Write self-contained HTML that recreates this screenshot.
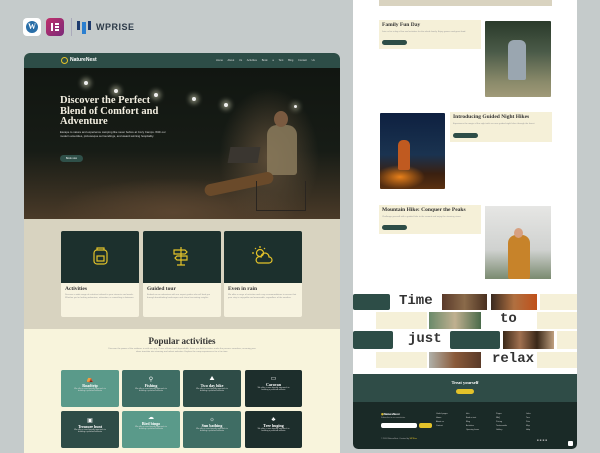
<!DOCTYPE html><html><head><meta charset="utf-8"><style>
*{margin:0;padding:0;box-sizing:border-box}
body{width:600px;height:450px;overflow:hidden;background:#c5cbcb;font-family:"Liberation Sans",sans-serif;position:relative}
.a{position:absolute}
.serif{font-family:"Liberation Serif",serif;font-weight:bold}
.t{font-size:2.2px;color:#999;line-height:3.4px}
</style></head><body>
<!-- logos -->
<div class="a" style="left:23px;top:18px;width:18px;height:18px;border-radius:4px;background:#fff"><div class="a" style="left:3px;top:3px;width:12px;height:12px;border-radius:50%;background:#2a6fa8;color:#fff;font:bold 8px 'Liberation Serif';text-align:center;line-height:12px">W</div></div>
<div class="a" style="left:46px;top:18px;width:18px;height:18px;border-radius:4px;background:linear-gradient(135deg,#c0306a,#7a2a7a)"><div class="a" style="left:5px;top:5px;width:2px;height:8px;background:#fff"></div><div class="a" style="left:9px;top:5px;width:4px;height:1.6px;background:#fff"></div><div class="a" style="left:9px;top:8.2px;width:4px;height:1.6px;background:#fff"></div><div class="a" style="left:9px;top:11.4px;width:4px;height:1.6px;background:#fff"></div></div>
<div class="a" style="left:71px;top:18px;width:1px;height:18px;background:#aab"></div>
<div class="a" style="left:77px;top:20px;width:14px;height:14px"><div class="a" style="left:0;top:1px;width:3px;height:9px;background:#1d3b6e"></div><div class="a" style="left:5px;top:2px;width:4px;height:12px;background:#2b7fd0"></div><div class="a" style="left:11px;top:1px;width:3px;height:9px;background:#1d3b6e"></div></div>
<div class="a" style="left:96px;top:22px;font-size:9px;font-weight:bold;color:#2c3a48;letter-spacing:.5px">WPRISE</div>

<!-- left panel -->
<div class="a" style="left:24px;top:53px;width:316px;height:400px;border-radius:6px 6px 0 0;overflow:hidden;background:#f8f4dc">
 <div class="a" style="left:0;top:0;width:316px;height:15px;background:#2d4d47"></div>
 <div class="a" style="left:37px;top:4px;width:7px;height:7px;border-radius:50%;border:1.5px solid #e3c22a"></div>
 <div class="a" style="left:46px;top:4px;font-size:5px;color:#fff;font-weight:bold">NatureNest</div>
 <div class="a" style="left:192px;top:6px;font-size:2.6px;color:#ddd;word-spacing:4px">Home About Us Activities Book a Tent Blog Contact Us</div>
 <div class="a" style="left:0;top:15px;width:316px;height:151px;background:radial-gradient(ellipse 50px 70px at 245px 90px,#5a4a36,transparent),radial-gradient(ellipse 120px 35px at 150px 145px,#5a4530,transparent),linear-gradient(180deg,#111611 0%,#171c16 55%,#4a3a28 100%)"></div>
 <div class="a" style="left:60px;top:28px;width:4px;height:4px;border-radius:50%;background:#eee;box-shadow:0 0 5px 3px rgba(255,255,220,.4)"></div>
 <div class="a" style="left:90px;top:36px;width:4px;height:4px;border-radius:50%;background:#eee;box-shadow:0 0 5px 3px rgba(255,255,220,.4)"></div>
 <div class="a" style="left:130px;top:40px;width:4px;height:4px;border-radius:50%;background:#eee;box-shadow:0 0 5px 3px rgba(255,255,220,.4)"></div>
 <div class="a" style="left:168px;top:44px;width:4px;height:4px;border-radius:50%;background:#eee;box-shadow:0 0 5px 3px rgba(255,255,220,.4)"></div>
 <div class="a" style="left:200px;top:50px;width:4px;height:4px;border-radius:50%;background:#eee;box-shadow:0 0 5px 3px rgba(255,255,220,.4)"></div>
 <div class="a" style="left:270px;top:52px;width:3px;height:3px;border-radius:50%;background:#eee;box-shadow:0 0 5px 3px rgba(255,255,220,.3)"></div>
 <!-- man -->
 <div class="a" style="left:243px;top:72px;width:30px;height:50px;background:#8a7a5c;border-radius:10px 10px 3px 3px;opacity:.85"></div>
 <div class="a" style="left:250px;top:58px;width:14px;height:16px;background:#7a5a40;border-radius:50%"></div>
 <div class="a" style="left:180px;top:125px;width:70px;height:12px;background:#6a4a2a;border-radius:6px;transform:rotate(-12deg)"></div>
 <div class="a" style="left:205px;top:94px;width:30px;height:16px;background:#3a3630;transform:skewX(-10deg)"></div>
 <div class="a" style="left:232px;top:128px;width:50px;height:30px;border:1.5px solid #2a2520;border-top:none"></div>
 <div class="a serif" style="left:36px;top:43px;font-size:10.5px;line-height:10.5px;color:#f2eee0;width:105px">Discover the Perfect Blend of Comfort and Adventure</div>
 <div class="a" style="left:36px;top:77px;font-size:2.8px;line-height:4px;color:#ddd;width:110px">Escape to nature and experience camping like never before at Cozy Camps. With our modern amenities, picturesque surroundings, and award-winning hospitality.</div>
 <div class="a" style="left:36px;top:102px;width:23px;height:7px;border-radius:4px;background:#2f5049;font-size:2.5px;color:#fff;text-align:center;line-height:7px">Book now</div>
 <div class="a" style="left:0;top:166px;width:316px;height:110px;background:#d8d3c0"></div>
 <!-- cards -->
 <div class="a" style="left:37px;top:178px;width:78px;height:86px;background:#f7f3e0;border-radius:2px;overflow:hidden"><div style="height:52px;background:#1c302d"></div></div>
 <div class="a" style="left:119px;top:178px;width:78px;height:86px;background:#f7f3e0;border-radius:2px;overflow:hidden"><div style="height:52px;background:#1c302d"></div></div>
 <div class="a" style="left:200px;top:178px;width:78px;height:86px;background:#f7f3e0;border-radius:2px;overflow:hidden"><div style="height:52px;background:#1c302d"></div></div>
 <svg class="a" style="left:0;top:0" width="316" height="300" fill="none" stroke="#e3c22a" stroke-width="1.2">
  <rect x="70" y="197" width="13" height="14" rx="3"/><rect x="73" y="203" width="7" height="5"/><path d="M73 197v-2h7v2"/>
  <path d="M157 194v18M153 212h8M150 197h11l2 2-2 2h-11zM163 203h-10l-2 2 2 2h10z"/>
  <circle cx="236" cy="200" r="3.5"/><path d="M236 193v2M230 200h-2M231 195l1 1M241 195l-1 1"/><path d="M234 210h11a3 3 0 0 0 0-6 4 4 0 0 0-8 0 3 3 0 0 0-3 6z"/>
 </svg>
 <div class="a serif" style="left:41px;top:233px;font-size:5.5px;color:#333">Activities</div>
 <div class="a serif" style="left:123px;top:233px;font-size:5.5px;color:#333">Guided tour</div>
 <div class="a serif" style="left:204px;top:233px;font-size:5.5px;color:#333">Even in rain</div>
 <div class="a t" style="left:41px;top:241px;width:70px">Discover a wide range of activities tailored to your interests and needs. Whether you're looking adventure, relaxation, or something in between.</div>
 <div class="a t" style="left:123px;top:241px;width:70px">Embark on an adventure with our expert guides who will lead you through breathtaking landscapes and share fascinating insights.</div>
 <div class="a t" style="left:204px;top:241px;width:70px">We offer a range of activities and cozy accommodations to ensure that your stay is enjoyable and memorable, regardless of the weather.</div>
 <div class="a serif" style="left:0;top:283px;width:316px;text-align:center;font-size:9px;color:#333">Popular activities</div>
 <div class="a t" style="left:83px;top:295px;width:150px;text-align:center">Discover the power of the outdoors in with our app. These efficient and dependable, these pre-build activities make the process seamless, ensuring your ideas translate into stunning and robust websites. Explore the camp experiences for a fun time.</div>
</div>
<!-- activity grid -->
<div class="a" style="left:61px;top:370px;width:58px;height:37px;background:#5a9a8a;border-radius:2px"></div>
<div class="a" style="left:122px;top:370px;width:58px;height:37px;background:#3f6d64;border-radius:2px"></div>
<div class="a" style="left:183px;top:370px;width:58px;height:37px;background:#2e4c47;border-radius:2px"></div>
<div class="a" style="left:245px;top:370px;width:57px;height:37px;background:#1d2e2c;border-radius:2px"></div>
<div class="a" style="left:61px;top:411px;width:58px;height:37px;background:#2e4c47;border-radius:2px"></div>
<div class="a" style="left:122px;top:411px;width:58px;height:37px;background:#5a9a8a;border-radius:2px"></div>
<div class="a" style="left:183px;top:411px;width:58px;height:37px;background:#3f6d64;border-radius:2px"></div>
<div class="a" style="left:245px;top:411px;width:57px;height:37px;background:#1d2e2c;border-radius:2px"></div>
<div class="a" style="left:61px;top:376px;width:58px;text-align:center;color:#fff"><div style="font-size:6px">⛺</div><div class="serif" style="font-size:4px">Roadtrip</div><div style="font-size:2px;color:#ddd">We offer a user-friendly approach to<br>building a polished website</div></div>
<div class="a" style="left:122px;top:376px;width:58px;text-align:center;color:#fff"><div style="font-size:6px">⚲</div><div class="serif" style="font-size:4px">Fishing</div><div style="font-size:2px;color:#ddd">We offer a user-friendly approach to<br>building a polished website</div></div>
<div class="a" style="left:183px;top:376px;width:58px;text-align:center;color:#fff"><div style="font-size:6px">⛰</div><div class="serif" style="font-size:4px">Two day hike</div><div style="font-size:2px;color:#ddd">We offer a user-friendly approach to<br>building a polished website</div></div>
<div class="a" style="left:245px;top:375px;width:57px;text-align:center;color:#fff"><div style="font-size:6px">▭</div><div class="serif" style="font-size:4px">Caravan</div><div style="font-size:2px;color:#ddd">We offer a user-friendly approach to<br>building a polished website</div></div>
<div class="a" style="left:61px;top:417px;width:58px;text-align:center;color:#fff"><div style="font-size:6px">▣</div><div class="serif" style="font-size:4px">Treasure hunt</div><div style="font-size:2px;color:#ddd">We offer a user-friendly approach to<br>building a polished website</div></div>
<div class="a" style="left:122px;top:414px;width:58px;text-align:center;color:#fff"><div style="font-size:6px">☁</div><div class="serif" style="font-size:4px">Bird bingo</div><div style="font-size:2px;color:#ddd">We offer a user-friendly approach to<br>building a polished website</div></div>
<div class="a" style="left:183px;top:417px;width:58px;text-align:center;color:#fff"><div style="font-size:6px">☼</div><div class="serif" style="font-size:4px">Sun bathing</div><div style="font-size:2px;color:#ddd">We offer a user-friendly approach to<br>building a polished website</div></div>
<div class="a" style="left:245px;top:417px;width:57px;text-align:center;color:#fff"><div style="font-size:6px">♣</div><div class="serif" style="font-size:4px">Tree huging</div><div style="font-size:2px;color:#ddd">We offer a user-friendly approach to<br>building a polished website</div></div>

<!-- right panel -->
<div class="a" style="left:353px;top:0;width:224px;height:449px;background:#fff;border-radius:0 0 5px 5px;overflow:hidden">
 <div class="a" style="left:26px;top:0;width:173px;height:6px;background:#d9d3c0"></div>
 <div class="a" style="left:26px;top:20px;width:102px;height:29px;background:#f5f0d8"></div>
 <div class="a serif" style="left:29px;top:22px;font-size:5.5px;color:#333">Family Fun Day</div>
 <div class="a t" style="left:29px;top:31px;width:95px">Join us for a day of fun and activities for the whole family. Enjoy games and great food.</div>
 <div class="a" style="left:29px;top:40px;width:25px;height:5px;border-radius:3px;background:#2d4d47"></div>
 <div class="a" style="left:132px;top:21px;width:66px;height:76px;border-radius:1px;background:linear-gradient(180deg,#2a3a2a,#4a5a48 40%,#8a8a6a 80%,#a09a78)"></div>
 <div class="a" style="left:155px;top:40px;width:18px;height:40px;background:#9aa6b0;border-radius:6px 6px 2px 2px"></div>
 <div class="a" style="left:27px;top:113px;width:65px;height:76px;border-radius:1px;background:radial-gradient(ellipse 25px 12px at 20px 64px,#e8801a,transparent),linear-gradient(180deg,#0e2040,#1a3350 55%,#3a2010 80%,#5a3010)"></div>
 <div class="a" style="left:45px;top:140px;width:12px;height:30px;background:#c05a20;border-radius:5px 5px 2px 2px"></div>
 <div class="a" style="left:97px;top:112px;width:102px;height:30px;background:#f5f0d8"></div>
 <div class="a serif" style="left:100px;top:114px;font-size:5.5px;color:#333">Introducing Guided Night Hikes</div>
 <div class="a t" style="left:100px;top:123px;width:95px">Experience the magic of the night with our new guided night hikes through the forest.</div>
 <div class="a" style="left:100px;top:133px;width:25px;height:5px;border-radius:3px;background:#2d4d47"></div>
 <div class="a" style="left:26px;top:205px;width:102px;height:29px;background:#f5f0d8"></div>
 <div class="a serif" style="left:29px;top:207px;font-size:5.5px;color:#333">Mountain Hike: Conquer the Peaks</div>
 <div class="a t" style="left:29px;top:216px;width:95px">Challenge yourself with a guided hike to the summit and enjoy the stunning views.</div>
 <div class="a" style="left:29px;top:225px;width:25px;height:5px;border-radius:3px;background:#2d4d47"></div>
 <div class="a" style="left:132px;top:206px;width:66px;height:73px;background:linear-gradient(180deg,#e6e6e4,#d0d2d0 60%,#7a8a70)"></div>
 <div class="a" style="left:155px;top:235px;width:22px;height:44px;background:#c7832a;border-radius:8px 8px 2px 2px"></div>
 <div class="a" style="left:161px;top:228px;width:9px;height:10px;background:#d7a080;border-radius:50%"></div>
 <!-- collage -->
 <div class="a" style="left:0;top:294px;width:37px;height:16px;background:#2d4d47;border-radius:2px"></div>
 <div class="a" style="left:46px;top:293px;font-family:'Liberation Mono',monospace;font-weight:bold;font-size:14px;color:#333">Time</div>
 <div class="a" style="left:89px;top:294px;width:45px;height:16px;background:linear-gradient(90deg,#5a3a2a,#8a6a4a,#4a3020)"></div>
 <div class="a" style="left:138px;top:294px;width:46px;height:16px;background:linear-gradient(90deg,#3a2a20,#b07040,#c0501a)"></div>
 <div class="a" style="left:187px;top:294px;width:37px;height:16px;background:#f5f0d8"></div>
 <div class="a" style="left:23px;top:312px;width:51px;height:17px;background:#f5f0d8"></div>
 <div class="a" style="left:76px;top:312px;width:52px;height:17px;background:linear-gradient(90deg,#6a8a6a,#c0b090,#4a6a4a)"></div>
 <div class="a" style="left:147px;top:311px;font-family:'Liberation Mono',monospace;font-weight:bold;font-size:14px;color:#333">to</div>
 <div class="a" style="left:184px;top:312px;width:40px;height:17px;background:#f5f0d8"></div>
 <div class="a" style="left:0;top:331px;width:40px;height:18px;background:#2d4d47;border-radius:2px"></div>
 <div class="a" style="left:55px;top:331px;font-family:'Liberation Mono',monospace;font-weight:bold;font-size:14px;color:#333">just</div>
 <div class="a" style="left:97px;top:331px;width:50px;height:18px;background:#2d4d47;border-radius:2px"></div>
 <div class="a" style="left:150px;top:331px;width:51px;height:18px;background:linear-gradient(90deg,#3a2818,#a07050,#3a2818,#c0a080)"></div>
 <div class="a" style="left:204px;top:331px;width:20px;height:18px;background:#f5f0d8"></div>
 <div class="a" style="left:23px;top:352px;width:51px;height:16px;background:#f5f0d8"></div>
 <div class="a" style="left:76px;top:352px;width:52px;height:16px;background:linear-gradient(90deg,#b0b0a8,#8a5a3a,#5a3a28)"></div>
 <div class="a" style="left:139px;top:351px;font-family:'Liberation Mono',monospace;font-weight:bold;font-size:14px;color:#333">relax</div>
 <div class="a" style="left:184px;top:352px;width:40px;height:16px;background:#f5f0d8"></div>
 <!-- cta/footer -->
 <div class="a" style="left:0;top:374px;width:224px;height:28px;background:#2f4c47"></div>
 <div class="a serif" style="left:0;top:380px;width:224px;text-align:center;font-size:4.5px;color:#fff">Treat yourself</div>
 <div class="a" style="left:103px;top:389px;width:18px;height:5px;border-radius:3px;background:#e3c22a"></div>
 <div class="a" style="left:0;top:402px;width:224px;height:47px;background:#1a2a27"></div>
 <div class="a" style="left:28px;top:412px;font-size:3px;color:#fff;font-weight:bold"><span style="color:#e3c22a">◉</span>NatureNest</div>
 <div class="a" style="left:28px;top:417px;font-size:2px;color:#aaa">Subscribe to our newsletter</div>
 <div class="a" style="left:28px;top:423px;width:36px;height:5px;border-radius:2px;background:#fff"></div>
 <div class="a" style="left:66px;top:423px;width:13px;height:5px;border-radius:2px;background:#e3c22a"></div>
 <div class="a" style="left:83px;top:412px;font-size:2px;color:#ccc;line-height:4px">Useful pages<br>Home<br>About us<br>Contact</div>
 <div class="a" style="left:113px;top:412px;font-size:2px;color:#ccc;line-height:4px">Info<br>Book a tent<br>Blog<br>Activities<br>Opening hours</div>
 <div class="a" style="left:143px;top:412px;font-size:2px;color:#ccc;line-height:4px">Pages<br>FAQ<br>Pricing<br>Testimonials<br>Gallery</div>
 <div class="a" style="left:173px;top:412px;font-size:2px;color:#ccc;line-height:4px">Links<br>Tour<br>Pets<br>Map<br>Help</div>
 <div class="a" style="left:28px;top:438px;font-size:2px;color:#aaa">© 2024 NatureNest. Created by <span style="color:#e3c22a">WPRise</span></div>
 <div class="a" style="left:184px;top:438px;font-size:3px;color:#aaa;letter-spacing:1px">■■■■</div>
 <div class="a" style="left:215px;top:441px;width:5px;height:5px;background:#fff;border-radius:1px"></div>
</div>
</body></html>
